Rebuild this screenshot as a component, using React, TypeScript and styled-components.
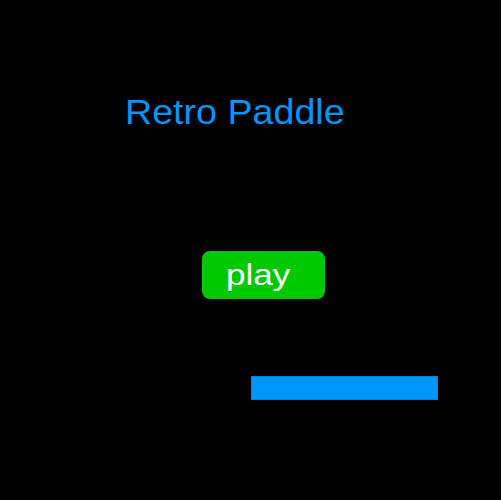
import styled, { createGlobalStyle } from 'styled-components'

const GlobalStyle = createGlobalStyle`
  html, body {
    margin: 0;
    padding: 0;
    background: #000;
  }
`

function App() {
  return (
    <>
      <GlobalStyle />
      <Screen>
        <Title>
          <Stretched $scale={1.075}>Retro Paddle</Stretched>
        </Title>
        <PlayButton>
          <Stretched $scale={1.17}>play</Stretched>
        </PlayButton>
        <Paddle />
      </Screen>
    </>
  )
}

export default App

const Screen = styled.div`
  width: 500px;
  height: 500px;
  background: #000;
  display: flex;
  flex-direction: column;
  align-items: flex-start;
  font-family: 'Liberation Sans', Arial, sans-serif;
  overflow: hidden;
`

const Stretched = styled.span<{ $scale: number }>`
  display: inline-block;
  transform: scaleX(${(p) => p.$scale});
  transform-origin: left center;
  white-space: nowrap;
`

const Title = styled.h1`
  margin: 94px 0 0 125px;
  font-size: 35px;
  font-weight: normal;
  line-height: 35px;
  height: 35px;
  color: #0095ff;
`

const PlayButton = styled.button`
  margin: 122px 0 0 202px;
  width: 123px;
  height: 48px;
  padding: 9px 0 0 24px;
  border: none;
  border-radius: 8px;
  background: #00c800;
  color: #fff;
  font-family: inherit;
  font-size: 30px;
  line-height: 29px;
  display: flex;
  align-items: flex-start;
  cursor: pointer;
`

const Paddle = styled.div`
  margin: 77px 0 0 251px;
  width: 187px;
  height: 24px;
  box-sizing: border-box;
  background: #0095ff;
  border: 1px solid #0a7fd0;
`
